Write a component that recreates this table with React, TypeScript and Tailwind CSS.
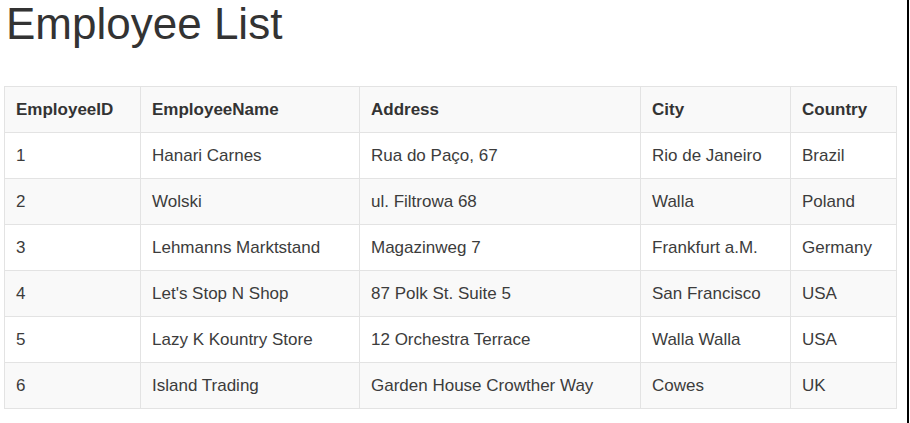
import React from "react";

const rows = [
  ["1", "Hanari Carnes", "Rua do Paço, 67", "Rio de Janeiro", "Brazil"],
  ["2", "Wolski", "ul. Filtrowa 68", "Walla", "Poland"],
  ["3", "Lehmanns Marktstand", "Magazinweg 7", "Frankfurt a.M.", "Germany"],
  ["4", "Let's Stop N Shop", "87 Polk St. Suite 5", "San Francisco", "USA"],
  ["5", "Lazy K Kountry Store", "12 Orchestra Terrace", "Walla Walla", "USA"],
  ["6", "Island Trading", "Garden House Crowther Way", "Cowes", "UK"],
];

const headers = ["EmployeeID", "EmployeeName", "Address", "City", "Country"];
const widths = ["w-[136px]", "w-[219px]", "w-[281px]", "w-[150px]", "w-[106px]"];

export default function App() {
  return (
    <div
      className="relative w-[910px] h-[423px] bg-white text-[#333] overflow-hidden"
      style={{ fontFamily: '"Liberation Sans", Arial, sans-serif' }}
    >
      <div className="absolute right-[1px] top-0 h-full w-[2px] bg-black" />
      <div className="pl-[4px] pr-[14px]">
        <h1 className="m-0 pl-[2px] text-[44px] leading-[1.1] font-normal text-[#333]">
          Employee List
        </h1>
        <table className="mt-[38px] border-collapse table-fixed w-[892px] text-[17px]">
          <thead>
            <tr className="bg-[#f9f9f9]">
              {headers.map((h, i) => (
                <th
                  key={h}
                  className={`${widths[i]} border border-[#e3e3e3] px-[11px] py-[10px] leading-[25px] text-left font-bold text-[#333]`}
                >
                  {h}
                </th>
              ))}
            </tr>
          </thead>
          <tbody>
            {rows.map((r, ri) => (
              <tr key={ri} className={ri % 2 === 1 ? "bg-[#f9f9f9]" : "bg-white"}>
                {r.map((c, ci) => (
                  <td
                    key={ci}
                    className="border border-[#e3e3e3] px-[11px] py-[10px] leading-[25px] text-left text-[#3c3c3c]"
                  >
                    {c}
                  </td>
                ))}
              </tr>
            ))}
          </tbody>
        </table>
      </div>
    </div>
  );
}
